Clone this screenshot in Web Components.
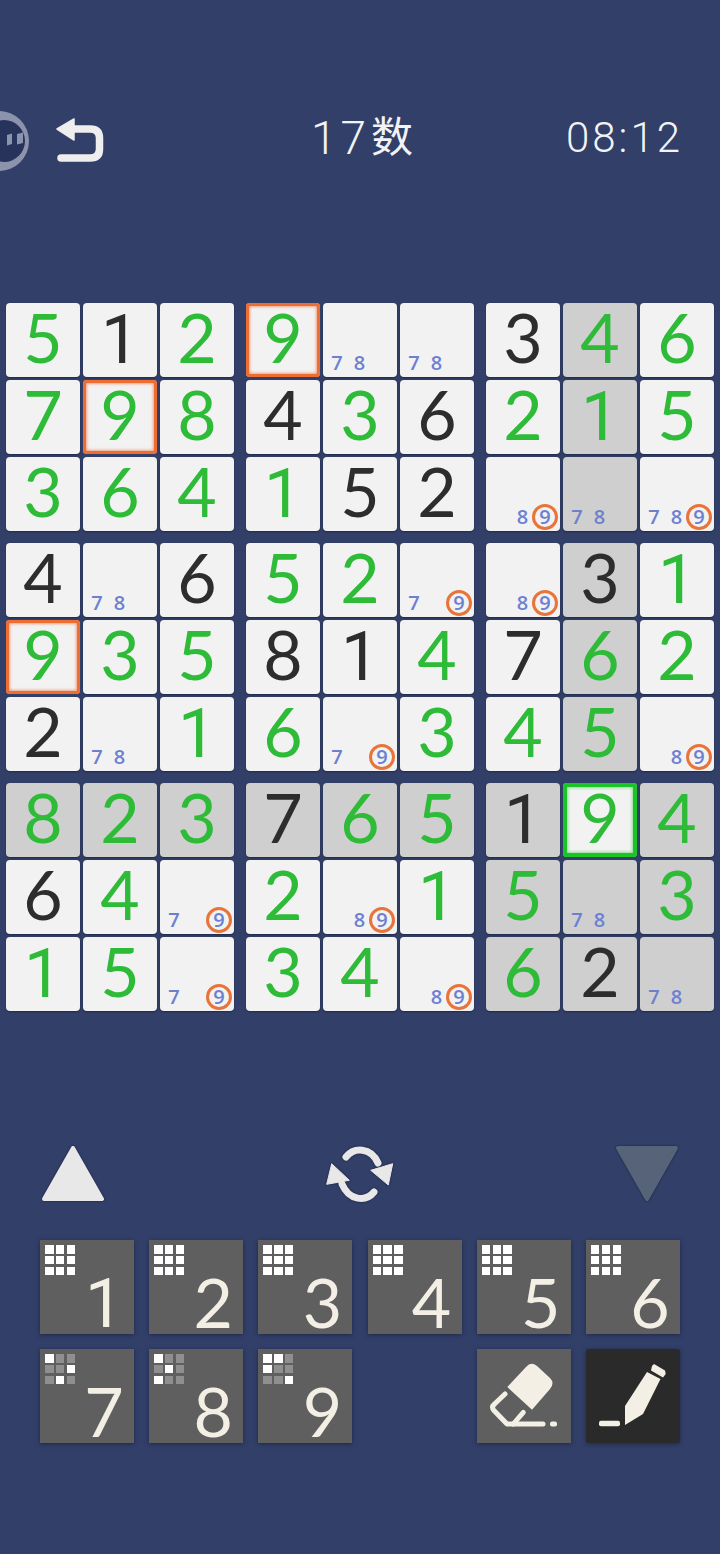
<!DOCTYPE html>
<html>
<head>
<meta charset="utf-8">
<title>Sudoku</title>
<style>
  html, body { margin: 0; background: #323f68; }
  body { width: 720px; height: 1554px; overflow: hidden; position: relative; font-family: Lato, "Noto Sans CJK SC", sans-serif; }
</style>
</head>
<body>
<float-ball></float-ball>
<top-bar title-text="数" title-num="17" time="08:12"></top-bar>
<sudoku-board></sudoku-board>
<control-row></control-row>
<key-pad></key-pad>

<script>
(function () {
  const GREEN = "#2dbb38";
  const DARK = "#2d2d2d";

  class FloatBall extends HTMLElement {
    constructor() {
      super();
      this.attachShadow({ mode: "open" });
      this.shadowRoot.innerHTML = `
        <style>
        :host{ position:absolute; left:-31px; top:111px; width:60px; height:60px; display:block; }
        svg{ display:block; }
        </style>
        <svg width="60" height="60" viewBox="0 0 60 60">
          <circle cx="30" cy="30" r="30" fill="#8c94ad"/>
          <circle cx="35" cy="30" r="21" fill="#28335c"/>
          <path d="M38 24 L43 22.5 V33 L38 34.5 Z" fill="#8c94ad"/>
          <path d="M48 23 L54 21.5 V32 L48 33.5 Z" fill="#8c94ad"/>
        </svg>`;
    }
  }

  class TopBar extends HTMLElement {
    constructor() {
      super();
      this.attachShadow({ mode: "open" });
      this.shadowRoot.innerHTML = `
        <style>
        :host{
            display:grid;
            grid-template-columns:1fr auto 1fr;
            align-items:center;
            box-sizing:border-box;
            height:76px;
            margin-top:100px;
            padding:0 40px 0 44px;
            color:#f2f3f6;
        }
        .back{ margin:6px 0 0 12px; display:block; }
        .title,.time{ font-family:Roboto,"Noto Sans CJK SC",sans-serif; line-height:76px; }
        .title{ font-size:42px; font-weight:400; display:flex; gap:1px; }
        .num{ font-weight:300; font-size:46px; letter-spacing:4px; }
        .time{ font-size:42px; font-weight:300; justify-self:end; letter-spacing:3px; margin-right:-3px; }
        </style>
        <svg class="back" width="48" height="46" viewBox="0 0 48 46">
          <path d="M1 11 L18 1 V22 Z" fill="#eeeeee" stroke="#eeeeee" stroke-width="1.5" stroke-linejoin="round"/>
          <path d="M16 11 H34 Q43.5 11 43.5 20 V31 Q43.5 40 34 40 H5" fill="none" stroke="#eeeeee" stroke-width="7.5" stroke-linecap="round"/>
        </svg>
        <div class="title"><span class="num"></span><span class="unit"></span></div>
        <div class="time"></div>`;
    }

    connectedCallback() {
      this.shadowRoot.querySelector(".num").textContent = this.getAttribute("title-num");
      this.shadowRoot.querySelector(".unit").textContent = this.getAttribute("title-text");
      this.shadowRoot.querySelector(".time").textContent = this.getAttribute("time");
    }
  }

  class SudokuCell extends HTMLElement {
    constructor() {
      super();
      this.attachShadow({ mode: "open" });
      this.shadowRoot.innerHTML = `
        <style>
        :host{
            display:flex;
            box-sizing:border-box;
            width:74px;
            height:74px;
            background:#f2f2f2;
            border-radius:4px;
            box-shadow:0 1px 2px rgba(0,0,0,.35);
            justify-content:center;
            align-items:center;
        }
        :host([shade]){ background:#cfcfcf; }
        :host([ring="orange"]){ box-shadow:inset 0 0 0 3px #ee6d33, inset 0 0 3px 4px rgba(238,109,51,.6); }
        :host([ring="green"]){ box-shadow:inset 0 0 0 4px #1cc428, inset 0 0 3px 5px rgba(28,196,40,.5); }
        .val{ font-family:Lato,sans-serif; font-size:68px; line-height:62px; padding-bottom:6px; }
        .val.one{ font-family:Roboto,sans-serif; padding:0; }
        .g{ color:${GREEN}; }
        .k{ color:${DARK}; }
        .notes{
            align-self:flex-end;
            display:grid;
            grid-template-columns:repeat(3,22.5px);
            box-sizing:border-box;
            width:74px;
            height:26px;
            margin-bottom:1px;
            padding-left:2.75px;
        }
        .n{
            display:flex;
            justify-content:center;
            align-items:center;
            justify-self:center;
            box-sizing:border-box;
            width:26px;
            height:26px;
            border-radius:50%;
            font-family:"Open Sans",sans-serif;
            font-weight:600;
            font-size:20px;
            line-height:20px;
            color:#6b80d0;
        }
        .n.hit{ border:3px solid #e8743a; }
        </style>
        <div id="body"></div>`;
    }

    connectedCallback() {
      const body = this.shadowRoot.getElementById("body");
      const v = this.getAttribute("v");
      const notes = this.getAttribute("notes");
      if (notes) {
        body.className = "notes";
        for (const d of ["7", "8", "9"]) {
          const n = document.createElement("span");
          n.className = "n";
          if (notes.includes(d)) {
            n.textContent = d;
            if (d === "9") n.classList.add("hit");
          }
          body.appendChild(n);
        }
      } else {
        body.className = "val " + this.getAttribute("c") + (v === "1" ? " one" : "");
        body.textContent = v;
      }
    }
  }

  // g/k + digit, "n" + notes. s = shaded, o = orange ring, r = green ring
  const PUZZLE = [
    "5g 1k 2g 9go n78 n78 3k 4gs 6g",
    "7g 9go 8g 4k 3g 6k 2g 1gs 5g",
    "3g 6g 4g 1g 5k 2k n89 n78s n789",
    "4k n78 6k 5g 2g n79 n89 3ks 1g",
    "9go 3g 5g 8k 1k 4g 7k 6gs 2g",
    "2k n78 1g 6g n79 3g 4g 5gs n89",
    "8gs 2gs 3gs 7ks 6gs 5gs 1ks 9gr 4gs",
    "6k 4g n79 2g n89 1g 5gs n78s 3gs",
    "1g 5g n79 3g 4g n89 6gs 2ks n78s"
  ].map((r) => r.split(" "));

  class SudokuBoard extends HTMLElement {
    constructor() {
      super();
      this.attachShadow({ mode: "open" });
      this.shadowRoot.innerHTML = `
        <style>
        :host{
            display:grid;
            grid-template-columns:repeat(3,228px);
            gap:12px;
            margin:127px 0 0 6px;
            width:708px;
        }
        .block{
            display:grid;
            grid-template-columns:repeat(3,74px);
            gap:3px;
        }
        </style>`;
      for (let b = 0; b < 9; b++) {
        const block = document.createElement("div");
        block.className = "block";
        for (let i = 0; i < 9; i++) {
          const r = Math.floor(b / 3) * 3 + Math.floor(i / 3);
          const c = (b % 3) * 3 + (i % 3);
          const code = PUZZLE[r][c];
          const cell = document.createElement("sudoku-cell");
          if (code[0] === "n") {
            cell.setAttribute("notes", code.replace(/\D/g, ""));
            if (code.endsWith("s")) cell.setAttribute("shade", "");
          } else {
            cell.setAttribute("v", code[0]);
            cell.setAttribute("c", code[1]);
            if (code[2] === "s") cell.setAttribute("shade", "");
            if (code[2] === "o") cell.setAttribute("ring", "orange");
            if (code[2] === "r") cell.setAttribute("ring", "green");
          }
          block.appendChild(cell);
        }
        this.shadowRoot.appendChild(block);
      }
    }
  }

  class ControlRow extends HTMLElement {
    constructor() {
      super();
      this.attachShadow({ mode: "open" });
      this.shadowRoot.innerHTML = `
        <style>
        :host{
            display:flex;
            justify-content:space-between;
            align-items:center;
            box-sizing:border-box;
            height:60px;
            margin-top:133px;
            padding:0 41px;
        }
        svg{ display:block; overflow:visible; filter:drop-shadow(0 0 1px rgba(20,25,50,.8)); }
        </style>
        <svg width="64" height="58" viewBox="0 0 64 58">
          <path d="M32 3 L61 54 H3 Z" fill="#e8e8e8" stroke="#e8e8e8" stroke-width="4" stroke-linejoin="round"/>
        </svg>
        <svg width="68" height="60" viewBox="0 0 68 60">
          <path d="M20 13 C28 3 45 3 52 19" fill="none" stroke="#e8e8e8" stroke-width="7" stroke-linecap="round"/>
          <path d="M66.7 19.7 L44.7 26.3 L62.3 41 Z" fill="#e8e8e8" stroke="#e8e8e8" stroke-width="1" stroke-linejoin="round"/>
          <path d="M48 48 C40 58 23 57 16 40" fill="none" stroke="#e8e8e8" stroke-width="7" stroke-linecap="round"/>
          <path d="M0.7 40.3 L5.7 19.7 L23.3 36.3 Z" fill="#e8e8e8" stroke="#e8e8e8" stroke-width="1" stroke-linejoin="round"/>
        </svg>
        <svg width="64" height="58" viewBox="0 0 64 58">
          <path d="M3 3 H61 L32 54 Z" fill="#566378" stroke="#566378" stroke-width="4" stroke-linejoin="round"/>
        </svg>`;
    }
  }

  class NumKey extends HTMLElement {
    constructor() {
      super();
      this.attachShadow({ mode: "open" });
      this.shadowRoot.innerHTML = `
        <style>
        :host{
            display:block;
            box-sizing:border-box;
            width:94px;
            height:94px;
            padding:5px;
            background:#5f5f5f;
            box-shadow:0 1px 4px rgba(20,25,50,.6);
            color:#f3efe4;
        }
        .dots{
            display:grid;
            grid-template-columns:repeat(3,8.5px);
            grid-auto-rows:8.5px;
            gap:2.3px;
        }
        .dots i{ background:#fff; }
        .dots i.off{ background:#8f8f8f; }
        .digit{
            margin:-1px 0 0 29px;
            width:60px;
            text-align:center;
            font-family:Lato,sans-serif;
            font-size:68px;
            line-height:56px;
        }
        .digit.one{ font-family:Roboto,sans-serif; font-weight:400; margin-top:1px; }
        </style>
        <div class="dots"></div>
        <div class="digit"></div>`;
    }

    connectedCallback() {
      const dots = this.shadowRoot.querySelector(".dots");
      const on = this.getAttribute("on") || "111111111";
      for (const ch of on) {
        const d = document.createElement("i");
        if (ch === "0") d.className = "off";
        dots.appendChild(d);
      }
      const n = this.getAttribute("n");
      const digit = this.shadowRoot.querySelector(".digit");
      digit.textContent = n;
      if (n === "1") digit.classList.add("one");
    }
  }

  class ToolKey extends HTMLElement {
    constructor() {
      super();
      this.attachShadow({ mode: "open" });
      this.shadowRoot.innerHTML = `
        <style>
        :host{
            display:flex;
            justify-content:center;
            align-items:center;
            box-sizing:border-box;
            width:94px;
            height:94px;
            background:#5f5f5f;
            box-shadow:0 1px 4px rgba(20,25,50,.6);
        }
        :host([active]){ background:#2a2a2a; border-radius:3px; }
        </style>
        <slot></slot>`;
    }
  }

  class KeyPad extends HTMLElement {
    constructor() {
      super();
      this.attachShadow({ mode: "open" });
      this.shadowRoot.innerHTML = `
        <style>
        :host{
            display:grid;
            grid-template-columns:repeat(6,94px);
            justify-content:space-between;
            row-gap:15px;
            box-sizing:border-box;
            width:640px;
            margin:36px 0 0 40px;
        }
        .empty{ width:94px; }
        svg{ display:block; }
        </style>
        <num-key n="1"></num-key>
        <num-key n="2"></num-key>
        <num-key n="3"></num-key>
        <num-key n="4"></num-key>
        <num-key n="5"></num-key>
        <num-key n="6"></num-key>
        <num-key n="7" on="100001010"></num-key>
        <num-key n="8" on="100010100"></num-key>
        <num-key n="9" on="110100001"></num-key>
        <div class="empty"></div>
        <tool-key>
          <svg width="94" height="94" viewBox="0 0 94 94">
            <path d="M30.3 38 L49 18 Q54 12 60 17 L73 29 Q78 34 73 40 L55 60.7 Z" fill="#f3efe4"/>
            <path d="M28 45 L17.5 55 Q14 58 17 61.5 L30 75 H66" fill="none" stroke="#f3efe4" stroke-width="5" stroke-linejoin="round" stroke-linecap="round"/>
            <path d="M46.3 63.3 L36.3 75" fill="none" stroke="#f3efe4" stroke-width="5" stroke-linecap="round"/>
            <rect x="73" y="72.5" width="7" height="5" rx="2" fill="#f3efe4"/>
          </svg>
        </tool-key>
        <tool-key active>
          <svg width="94" height="94" viewBox="0 0 94 94">
            <rect x="13" y="71.7" width="21" height="5.6" rx="2" fill="#f3efe4"/>
            <path d="M39 57 L61 23 L74.5 30 L57 65 L39 76 Z" fill="#f3efe4"/>
            <path d="M66 17 L68 15 L79 21.5 L79.7 25 L77 28.5 L65 21.5 Z" fill="#f3efe4"/>
          </svg>
        </tool-key>`;
    }
  }

  customElements.define("float-ball", FloatBall);
  customElements.define("top-bar", TopBar);
  customElements.define("sudoku-cell", SudokuCell);
  customElements.define("sudoku-board", SudokuBoard);
  customElements.define("control-row", ControlRow);
  customElements.define("num-key", NumKey);
  customElements.define("tool-key", ToolKey);
  customElements.define("key-pad", KeyPad);
})();
</script>
</body>
</html>
